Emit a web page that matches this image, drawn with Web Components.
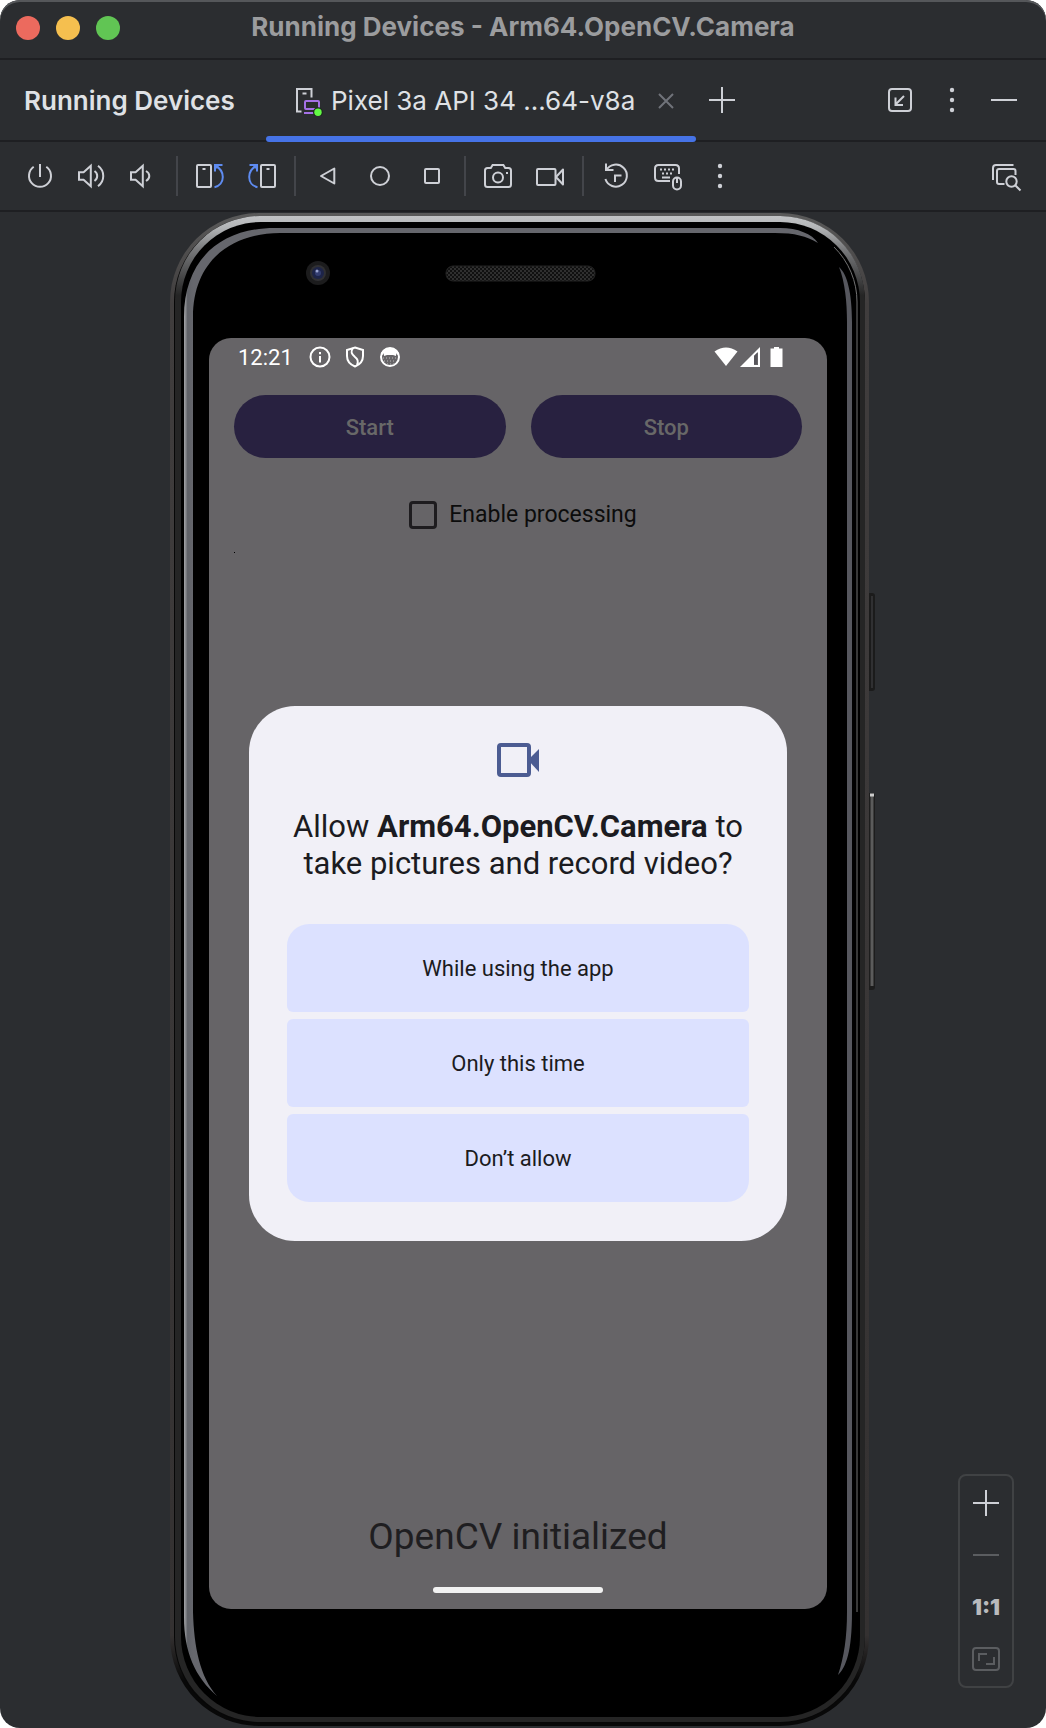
<!DOCTYPE html>
<html lang="en">
<head>
<meta charset="utf-8">
<title>Running Devices - Arm64.OpenCV.Camera</title>
<style>
  html, body { margin: 0; background: #fff; }
  body { font-family: Inter, "Liberation Sans", sans-serif; }
</style>
</head>
<body>
<ide-window>
  <title-bar slot="title">Running Devices - Arm64.OpenCV.Camera</title-bar>
  <tab-strip slot="tabs">
    <span slot="label">Running Devices</span>
    <span slot="tab">Pixel 3a API 34 ...64-v8a</span>
  </tab-strip>
  <device-toolbar slot="toolbar"></device-toolbar>
  <phone-device>
    <camera-app></camera-app>
    <permission-dialog slot="dialog">
      <span>Allow</span> <b>Arm64.OpenCV.Camera</b> <span>to</span>
      <span>take pictures and record video?</span>
      <button-choice slot="choice" shape="first">While using the app</button-choice>
      <button-choice slot="choice">Only this time</button-choice>
      <button-choice slot="choice" shape="last">Don’t allow</button-choice>
    </permission-dialog>
  </phone-device>
  <zoom-panel slot="overlay"></zoom-panel>
</ide-window>

<script>
const define = (name, html, setup) => {
  const template = document.createElement('template');
  template.innerHTML = html;
  customElements.define(name, class extends HTMLElement {
    constructor() {
      super();
      this.attachShadow({ mode: 'open' }).append(template.content.cloneNode(true));
    }
    connectedCallback() { if (setup) setup(this); }
  });
};

const ICONS = {
  power: '<path d="M9.7 6.8a11 11 0 1 0 12.6 0M16 4v13"/>',
  volumeUp: '<path d="M3 12.2h4.6l7.2-6.4v20.4l-7.2-6.4H3zM18.5 11c3.6 2.6 3.6 7.4 0 10M22 5.8c7 5.2 7 15.2 0 20.4"/>',
  volumeDown: '<path d="M3 12.2h4.6l7.2-6.4v20.4l-7.2-6.4H3zM18 11c4.4 2.6 4.4 7.4 0 10"/>',
  rotateLeft: '<rect x="3" y="5" width="14" height="22" rx="1"/><path d="M8.5 9h3"/><path stroke="#5e8bf0" d="M20.5 27.2c5-1 8.3-5 8.3-10.2 0-4.5-2.3-8.5-7-11M21 11.5V5h7.5"/><path fill="#5e8bf0" stroke="none" d="M20.5 4.5h6l-6 6z"/>',
  rotateRight: '<rect x="15" y="5" width="14" height="22" rx="1"/><path d="M20.5 9h3"/><path stroke="#5e8bf0" d="M11.5 27.2c-5-1-8.3-5-8.3-10.2 0-4.5 2.3-8.5 7-11M11 11.5V5H3.5"/><path fill="#5e8bf0" stroke="none" d="M11.5 4.5h-6l6 6z"/>',
  back: '<path stroke-linejoin="round" d="M9 16 22.3 8.5v15z"/>',
  home: '<circle cx="16" cy="16" r="9"/>',
  recents: '<rect x="9" y="9" width="14" height="14" rx="1"/>',
  camera: '<path d="M5.5 8h3.3l1.8-3h10.8l1.8 3h3.3Q29 8 29 10.5v14q0 2.5-2.5 2.5h-21Q3 27 3 24.5v-14Q3 8 5.5 8z"/><circle cx="16" cy="17.5" r="5"/><path d="M24 13h2"/>',
  video: '<rect x="3" y="9" width="18.5" height="16" rx="1"/><path stroke-linejoin="round" d="m22 17 7-7.500v15z"/>',
  reset: '<path d="M6 3.5V10h7.5M6.300 10.200a11 11 0 1 1-.9 8.800M15 22v-6.500h6.500"/>',
  input: '<path d="M18 21H6.500Q3 21 3 17.500v-9Q3 5 6.500 5h17Q27 5 27 8.500V14M10 17.500h8"/><path stroke-dasharray="2 2" d="M8 9.500h15M10 13.500h12"/><rect x="21" y="17.500" width="8" height="12" rx="4"/><path d="M25 18v5"/>',
  dots: '<g fill="#ced0d6" stroke="none"><circle cx="16" cy="6" r="2.200"/><circle cx="16" cy="16" r="2.200"/><circle cx="16" cy="26" r="2.200"/></g>',
  inspect: '<path d="M3 20V8q0-3 3-3h17.500M14.500 24H9q-2 0-2-2V11q0-2 2-2h14.500q2 0 2 2v4"/><circle cx="21.500" cy="21.500" r="5.200"/><path d="m25.500 25.500 5 5"/>',
  plus: '<path d="M3 16h26M16 3v26"/>',
  minus: '<path d="M3 16h26"/>',
  close: '<path d="m9 9 14 14M23 9 9 23"/>',
  dock: '<rect x="5" y="5" width="22" height="22" rx="3"/><path d="M20 12l-8 8M11.500 13.500V21H19"/>',
  fit: '<rect x="3" y="5" width="26" height="22" rx="3"/><path d="M9 18v-7h8M16 21h8v-7"/>',
  device: '<path d="M7.500 27.500H3V5h14.500v8.500M8.500 9.500h4"/><g stroke="#a571e6"><rect x="11" y="17" width="14" height="8" rx="1"/><path d="M10 29h11"/></g><circle cx="24" cy="28.300" r="5" fill="#1f2a20" stroke="none"/><circle cx="24" cy="28.300" r="3.700" fill="#62fa44" stroke="none"/>'
};

define('line-icon', `
  <style>
    :host { display: block; flex: none; width: 32px; height: 32px; color: #ced0d6; }
    svg { display: block; width: 100%; height: 100%; fill: none; stroke: currentColor; stroke-width: 2; }
  </style>
  <svg viewBox="0 0 32 32" aria-hidden="true"></svg>`,
  el => { el.shadowRoot.querySelector('svg').innerHTML = ICONS[el.getAttribute('name')]; });

define('icon-button', `
  <style>
    :host { display: block; flex: none; width: 52px; color: #ced0d6; }
    button { display: flex; justify-content: center; align-items: center; width: 100%; padding: 4px 0; border: 0; background: none; color: inherit; }
    line-icon { color: inherit; }
  </style>
  <button type="button"></button>`,
  el => {
    const icon = document.createElement('line-icon');
    icon.setAttribute('name', el.getAttribute('name'));
    const button = el.shadowRoot.querySelector('button');
    button.setAttribute('aria-label', el.getAttribute('label'));
    button.replaceChildren(icon);
  });

define('ide-window', `
  <style>
    :host { display: flex; flex-direction: column; position: relative; box-sizing: border-box; min-height: 100vh; background: #2b2d30; border-radius: 20px; overflow: hidden; box-shadow: inset 0 2px #55575a; }
    main { flex: 1; display: flex; justify-content: center; }
    aside { position: absolute; right: 32px; bottom: 40px; }
  </style>
  <slot name="title"></slot>
  <slot name="tabs"></slot>
  <slot name="toolbar"></slot>
  <main><slot></slot></main>
  <aside><slot name="overlay"></slot></aside>`);

define('title-bar', `
  <style>
    :host { display: grid; grid-template-columns: 1fr auto 1fr; align-items: center; height: 54px; padding: 0 16px 4px; border-bottom: 2px solid #1e1f22; color: #9b9c9e; }
    .lights { display: flex; gap: 16px; padding-top: 2px; }
    button { width: 24px; height: 24px; padding: 0; border: 0; border-radius: 50%; }
    .close { background: #ec6a5e; } .min { background: #f5bf4f; } .max { background: #61c554; }
    h1 { margin: 0; font-size: 26px; line-height: 32px; font-weight: 700; }
  </style>
  <div class="lights">
    <button class="close" aria-label="Close"></button>
    <button class="min" aria-label="Minimize"></button>
    <button class="max" aria-label="Zoom"></button>
  </div>
  <h1><slot></slot></h1>`);

define('tab-strip', `
  <style>
    :host { display: flex; height: 80px; border-bottom: 2px solid #1e1f22; color: #dfe1e5; font-size: 26px; line-height: 32px; }
    .label { flex: 0 0 266px; box-sizing: border-box; padding: 2px 0 0 24px; font-weight: 600; align-self: center; white-space: nowrap; }
    .tab { flex: 0 1 430px; box-sizing: border-box; display: flex; align-items: center; gap: 4px; padding: 0 4px 0 28px; position: relative; white-space: nowrap; }
    .tab::after { content: ""; position: absolute; left: 0; right: 0; bottom: -2px; height: 6px; border-radius: 3px; background: #4673e6; }
    .text { flex: 1; padding: 2px 0 0 1px; }
    .actions { margin-left: auto; display: flex; align-items: center; padding-right: 16px; }
    .close { color: #70737a; padding-top: 2px; }
    icon-button { align-self: center; }
  </style>
  <div class="label"><slot name="label"></slot></div>
  <div class="tab">
    <line-icon name="device"></line-icon>
    <span class="text"><slot name="tab"></slot></span>
    <icon-button class="close" name="close" label="Close tab"></icon-button>
  </div>
  <icon-button name="plus" label="Add device"></icon-button>
  <div class="actions">
    <icon-button name="dock" label="Dock"></icon-button>
    <icon-button name="dots" label="More options"></icon-button>
    <icon-button name="minus" label="Hide"></icon-button>
  </div>`);

define('device-toolbar', `
  <style>
    :host { display: flex; align-items: center; height: 68px; padding: 0 14px; border-bottom: 2px solid #1e1f22; }
    hr { flex: none; width: 2px; height: 40px; margin: 0 6px; border: 0; background: #43454a; }
    .end { margin-left: auto; }
  </style>
  <icon-button name="power" label="Power"></icon-button>
  <icon-button name="volumeUp" label="Volume up"></icon-button>
  <icon-button name="volumeDown" label="Volume down"></icon-button>
  <hr>
  <icon-button name="rotateLeft" label="Rotate left"></icon-button>
  <icon-button name="rotateRight" label="Rotate right"></icon-button>
  <hr>
  <icon-button name="back" label="Back"></icon-button>
  <icon-button name="home" label="Home"></icon-button>
  <icon-button name="recents" label="Overview"></icon-button>
  <hr>
  <icon-button name="camera" label="Take screenshot"></icon-button>
  <icon-button name="video" label="Record screen"></icon-button>
  <hr>
  <icon-button name="reset" label="Snapshots"></icon-button>
  <icon-button name="input" label="Hardware input"></icon-button>
  <icon-button name="dots" label="More actions"></icon-button>
  <icon-button class="end" name="inspect" label="Layout inspector"></icon-button>`);

define('phone-device', `
  <style>
    :host { display: flex; position: relative; box-sizing: border-box; width: 100%; max-width: 706px; padding: 126px 49px 119px 39px; font-family: Roboto, "Liberation Sans", sans-serif; }
    .frame { position: absolute; inset: 0; width: 100%; height: 100%; }
    .screen { flex: 1; display: flex; position: relative; border-radius: 22px; background: #666467; overflow: hidden; }
    .overlay { position: absolute; inset: 0; display: flex; align-items: center; padding: 0 40px; }
  </style>
  <svg class="frame" viewBox="0 0 706 1516" preserveAspectRatio="none" aria-hidden="true">
    <defs>
      <linearGradient id="rim" gradientUnits="userSpaceOnUse" x1="0" y1="0" x2="0" y2="1516">
        <stop offset="0" stop-color="#c6c8ca"/><stop offset=".01" stop-color="#b4b6b8"/><stop offset=".025" stop-color="#77787a"/><stop offset=".055" stop-color="#252525"/><stop offset="1" stop-color="#252525"/>
      </linearGradient>
      <linearGradient id="edge" x1="0" y1="0" x2="0" y2="1">
        <stop offset="0" stop-color="#5a5a5a"/><stop offset=".06" stop-color="#403d3d"/><stop offset=".94" stop-color="#343131"/><stop offset=".97" stop-color="#080808"/>
      </linearGradient>
      <linearGradient id="band" gradientUnits="userSpaceOnUse" x1="14" y1="0" x2="23" y2="0">
        <stop offset="0" stop-color="#a4a5a8"/><stop offset=".2" stop-color="#85878b"/><stop offset=".4" stop-color="#5f6167"/><stop offset="1" stop-color="#66676d"/>
      </linearGradient>
      <pattern id="mesh" width="4" height="4" patternUnits="userSpaceOnUse">
        <rect width="4" height="4" fill="#101010"/><path d="M0 0h2v2H0zM2 2h2v2H2z" fill="#2f2f2f"/>
      </pattern>
    </defs>
    <rect x="696" y="381" width="9" height="98" rx="3" fill="#1b1b1b"/>
    <path d="M702 384v92" stroke="#303032" stroke-width="2"/>
    <rect x="696" y="581" width="9" height="197" rx="3" fill="#1d1d1d"/>
    <path d="M702 584v190" stroke="#5b5b5b" stroke-width="3"/>
    <path d="M700 583h4" stroke="#ccc" stroke-width="3"/>
    <rect x="0" y="1" width="699" height="1513" rx="89" fill="url(#edge)"/>
    <rect x="4" y="4" width="691" height="1507" rx="86" fill="#070707"/>
    <rect x="5" y="4" width="690" height="1506" rx="85" fill="url(#rim)"/>
    <rect x="11" y="10" width="679" height="1495" rx="80" fill="#000"/>
    <path d="M687 1400V90A77 77 0 0 0 664 35" fill="none" stroke="#737373" stroke-width="1"/>
    <path fill="url(#band)" d="M47 1484C25 1465 14 1440 14 1405V105C14 50 48 16 105 16H610C628 16 642 22 648 31C636 24 625 21 605 21H110C60 21 23 50 23 105V1400C24 1435 30 1465 47 1484Z"/>
    <path fill="#56575e" d="M669 55C677 62 682 80 682 110V1400C682 1440 676 1455 668 1463C674 1445 677 1425 677 1400V110C677 90 675 70 669 55Z"/>
    <circle cx="148" cy="61" r="12" fill="#1c1c1d"/>
    <circle cx="148" cy="61" r="8" fill="#303033"/>
    <circle cx="148" cy="61" r="6" fill="#1d2448"/>
    <circle cx="148" cy="61" r="3" fill="#333d70"/>
    <circle cx="147" cy="59" r="1.500" fill="#98a2cf"/>
    <rect x="276" y="54" width="149" height="15" rx="7" fill="url(#mesh)" stroke="#222"/>
  </svg>
  <div class="screen">
    <slot></slot>
    <div class="overlay"><slot name="dialog"></slot></div>
  </div>`);

define('status-bar', `
  <style>
    :host { display: flex; align-items: center; height: 38px; padding: 0 41px 0 29px; color: #fff; }
    time { font-size: 22px; line-height: 26px; padding: 2px 15px 0 0; }
    svg { display: block; height: 24px; }
    .left { display: flex; gap: 11px; }
    .right { display: flex; margin-left: auto; }
  </style>
  <time>12:21</time>
  <div class="left">
    <svg width="24" viewBox="0 0 24 24" fill="none" stroke="#fff" stroke-width="2"><circle cx="12" cy="12" r="9.500"/><path d="M12 11v6.500M12 7v2.200"/></svg>
    <svg width="24" viewBox="0 0 24 24" fill="none" stroke="#fff" stroke-width="2"><path d="M12 2.500 20 5v6c0 5-3 8.500-8 10.500C7 19.500 4 16 4 11V5z"/><path d="M10 3c-3 4-1 6.500 2 9 3 2.200 3.500 5 2 8"/></svg>
    <svg width="24" viewBox="0 0 24 24"><circle cx="12" cy="12" r="9" fill="none" stroke="#fff" stroke-width="2"/><path fill="#fff" d="M3 9C5 1 19 1 21 9l-2 1-1-2v3l-3-1H9l-3 1V8l-1 2z"/><path d="M5 13h14M6 16h12M9 19h7" stroke="#bbb" stroke-width="1" stroke-dasharray="1 2"/></svg>
  </div>
  <div class="right">
    <svg width="24" viewBox="0 0 24 24" fill="#fff"><path d="M.500 6.500Q12-1.500 23.500 6.500L12 21z"/></svg>
    <svg width="24" viewBox="0 0 24 24"><path fill="#fff" d="M22 2v20H2z"/><path fill="#666467" d="m16 11 4-4v13h-4z"/><path fill="#57555a" d="m16 11 3-3v11h-3z"/></svg>
    <svg width="24" viewBox="0 0 24 24" fill="#fff"><path d="M12 2h5v1.500h3.500V22h-12V3.500H12z"/></svg>
  </div>`);

define('camera-app', `
  <style>
    :host { flex: 1; display: flex; flex-direction: column; }
    .content { flex: 1; display: flex; flex-direction: column; padding: 19px 25px 0; }
    .buttons { display: flex; gap: 25px; }
    .buttons button { flex: 1; height: 63px; padding: 2px 16px 0; border: 0; border-radius: 32px; background: #282140; color: #686868; font: 500 22px/26px Roboto, sans-serif; }
    label { display: flex; align-items: center; justify-content: center; gap: 12px; margin-top: 43px; padding-left: 10px; font-size: 23px; line-height: 28px; color: #0c0c0c; }
    input { appearance: none; width: 28px; height: 28px; margin: 0; border: 3px solid #1e1c1f; border-radius: 4px; }
    .dot { width: 1px; height: 1px; margin-top: 23px; background: #000; }
    .state { margin: auto 0 0; padding-bottom: 28px; text-align: center; font-size: 37px; line-height: 44px; color: #1f1e21; }
    .home { width: 170px; height: 6px; margin: 0 auto 16px; border-radius: 3px; background: #f2f2f2; }
  </style>
  <status-bar></status-bar>
  <div class="content">
    <div class="buttons"><button type="button">Start</button><button type="button">Stop</button></div>
    <label for="proc"><input type="checkbox" id="proc">Enable processing</label>
    <div class="dot"></div>
    <p class="state">OpenCV initialized</p>
  </div>
  <div class="home"></div>`);

define('permission-dialog', `
  <style>
    :host { flex: 1; display: flex; flex-direction: column; align-items: center; padding: 30px 38px 39px; border-radius: 46px; background: #f1f0f7; color: #1b1b21; }
    svg { display: block; width: 48px; height: 48px; }
    h2 { margin: 24px 0 42px; font-size: 31px; line-height: 37px; font-weight: 400; text-align: center; }
    .choices { align-self: stretch; display: flex; flex-direction: column; gap: 7px; }
  </style>
  <svg viewBox="0 0 48 48" aria-hidden="true"><rect x="5" y="9" width="30" height="30" rx="2" fill="none" stroke="#4c5c92" stroke-width="4"/><path fill="#4c5c92" d="m34 24 11-11v23z"/></svg>
  <h2><slot></slot></h2>
  <div class="choices"><slot name="choice"></slot></div>`);

define('button-choice', `
  <style>
    :host { display: block; }
    button { display: block; width: 100%; height: 88px; padding: 2px 16px 0; border: 0; border-radius: 6px; background: #dce1ff; color: #1b1b21; font: 400 22px/26px Roboto, sans-serif; }
    :host([shape=first]) button { border-radius: 22px 22px 6px 6px; }
    :host([shape=last]) button { border-radius: 6px 6px 22px 22px; }
  </style>
  <button type="button"><slot></slot></button>`);

define('zoom-panel', `
  <style>
    :host { display: flex; flex-direction: column; align-items: center; gap: 12px; box-sizing: border-box; width: 56px; padding: 7px 0; border: 2px solid #404244; border-radius: 8px; background: #2b2d30; }
    .off { color: #5b5d60; }
    button { height: 40px; padding: 0; border: 0; background: none; color: #b9babd; font: 900 22px/40px Inter, sans-serif; }
  </style>
  <icon-button name="plus" label="Zoom in"></icon-button>
  <icon-button class="off" name="minus" label="Zoom out"></icon-button>
  <button type="button">1:1</button>
  <icon-button class="off" name="fit" label="Fit to window"></icon-button>`);
</script>
</body>
</html>
